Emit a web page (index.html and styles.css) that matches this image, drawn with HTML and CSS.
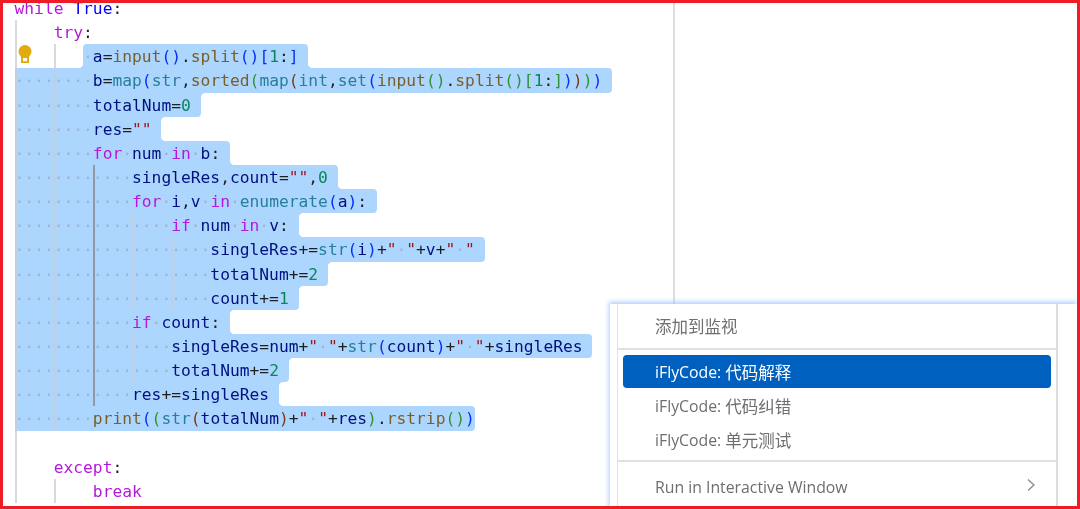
FILE: index.html
```html
<!DOCTYPE html>
<html lang="zh">
<head>
<meta charset="utf-8">
<title>iFlyCode</title>
<link rel="stylesheet" href="styles.css">
</head>
<body>
<div class="frame">
  <div class="editor">
    <div class="code">
      <div class="ln"><span class="k">while</span> <span class="t">True</span>:</div>
      <div class="ln"><span class="g">    </span><span class="k">try</span>:</div>
      <div class="ln"><span class="g">    </span><span class="g">   </span><span class="sel first cd"><span class="d">·</span><span class="n">a</span>=<span class="y">input</span><span class="b1">()</span>.<span class="y">split</span><span class="b1">()</span><span class="b1">[</span><span class="c">1</span>:<span class="b1">]</span></span></div>
      <div class="ln"><span class="sel"><span class="g d">····</span><span class="g d">····</span><span class="n">b</span>=<span class="f">map</span><span class="b1">(</span><span class="f">str</span>,<span class="y">sorted</span><span class="b2">(</span><span class="f">map</span><span class="b3">(</span><span class="f">int</span>,<span class="f">set</span><span class="b1">(</span><span class="y">input</span><span class="b2">()</span>.<span class="y">split</span><span class="b2">()</span><span class="b2">[</span><span class="c">1</span>:<span class="b2">]</span><span class="b1">)</span><span class="b3">)</span><span class="b2">)</span><span class="b1">)</span></span></div>
      <div class="ln"><span class="sel ct"><span class="g d">····</span><span class="g d">····</span><span class="n">totalNum</span>=<span class="c">0</span></span></div>
      <div class="ln"><span class="sel ct cd"><span class="g d">····</span><span class="g d">····</span><span class="n">res</span>=<span class="s">""</span></span></div>
      <div class="ln"><span class="sel cd"><span class="g d">····</span><span class="g d">····</span><span class="k">for</span><span class="d">·</span><span class="n">num</span><span class="d">·</span><span class="k">in</span><span class="d">·</span><span class="n">b</span>:</span></div>
      <div class="ln"><span class="sel cd"><span class="g d">····</span><span class="g d">····</span><span class="g a d">····</span><span class="n">singleRes</span>,<span class="n">count</span>=<span class="s">""</span>,<span class="c">0</span></span></div>
      <div class="ln"><span class="sel"><span class="g d">····</span><span class="g d">····</span><span class="g a d">····</span><span class="k">for</span><span class="d">·</span><span class="n">i</span>,<span class="n">v</span><span class="d">·</span><span class="k">in</span><span class="d">·</span><span class="f">enumerate</span><span class="b1">(</span><span class="n">a</span><span class="b1">)</span>:</span></div>
      <div class="ln"><span class="sel ct cd"><span class="g d">····</span><span class="g d">····</span><span class="g a d">····</span><span class="g d">····</span><span class="k">if</span><span class="d">·</span><span class="n">num</span><span class="d">·</span><span class="k">in</span><span class="d">·</span><span class="n">v</span>:</span></div>
      <div class="ln"><span class="sel"><span class="g d">····</span><span class="g d">····</span><span class="g a d">····</span><span class="g d">····</span><span class="g d">····</span><span class="n">singleRes</span>+=<span class="f">str</span><span class="b1">(</span><span class="n">i</span><span class="b1">)</span>+<span class="s">"<span class="d">·</span>"</span>+<span class="n">v</span>+<span class="s">"<span class="d">·</span>"</span></span></div>
      <div class="ln"><span class="sel ct"><span class="g d">····</span><span class="g d">····</span><span class="g a d">····</span><span class="g d">····</span><span class="g d">····</span><span class="n">totalNum</span>+=<span class="c">2</span></span></div>
      <div class="ln"><span class="sel ct"><span class="g d">····</span><span class="g d">····</span><span class="g a d">····</span><span class="g d">····</span><span class="g d">····</span><span class="n">count</span>+=<span class="c">1</span></span></div>
      <div class="ln"><span class="sel ct cd"><span class="g d">····</span><span class="g d">····</span><span class="g a d">····</span><span class="k">if</span><span class="d">·</span><span class="n">count</span>:</span></div>
      <div class="ln"><span class="sel"><span class="g d">····</span><span class="g d">····</span><span class="g a d">····</span><span class="g d">····</span><span class="n">singleRes</span>=<span class="n">num</span>+<span class="s">"<span class="d">·</span>"</span>+<span class="f">str</span><span class="b1">(</span><span class="n">count</span><span class="b1">)</span>+<span class="s">"<span class="d">·</span>"</span>+<span class="n">singleRes</span></span></div>
      <div class="ln"><span class="sel ct"><span class="g d">····</span><span class="g d">····</span><span class="g a d">····</span><span class="g d">····</span><span class="n">totalNum</span>+=<span class="c">2</span></span></div>
      <div class="ln"><span class="sel ct cd"><span class="g d">····</span><span class="g d">····</span><span class="g a d">····</span><span class="n">res</span>+=<span class="n">singleRes</span></span></div>
      <div class="ln"><span class="sel last"><span class="g d">····</span><span class="g d">····</span><span class="y">print</span><span class="b1">(</span><span class="b2">(</span><span class="f">str</span><span class="b3">(</span><span class="n">totalNum</span><span class="b3">)</span>+<span class="s">"<span class="d">·</span>"</span>+<span class="n">res</span><span class="b2">)</span>.<span class="y">rstrip</span><span class="b2">()</span><span class="b1">)</span></span></div>
      <div class="ln"><span class="g">    </span></div>
      <div class="ln"><span class="g">    </span><span class="k">except</span>:</div>
      <div class="ln"><span class="g">    </span><span class="g">    </span><span class="k">break</span></div>
    </div>
    <svg class="bulb" viewBox="0 0 14 18" width="14" height="18" aria-hidden="true">
      <path d="M7 0a6.5 6.5 0 0 1 6.5 6.5c0 2.6-1.6 3.9-2.5 5.5H3C2.100 10.400.5 9.100.5 6.500A6.500 6.500 0 0 1 7 0z" fill="#e2ab0c"/>
      <path d="M3 11.500h8V18H3z" fill="#e2ab0c"/>
      <path d="M5 13h4v3.200H5z" fill="#fff"/>
    </svg>
  </div>
  <div class="menu">
    <div class="menu-in">
      <div class="item top"><span class="cjk">添加到监视</span></div>
      <div class="sep"></div>
      <div class="item hl">iFlyCode: <span class="cjk">代码解释</span></div>
      <div class="item">iFlyCode: <span class="cjk">代码纠错</span></div>
      <div class="item">iFlyCode: <span class="cjk">单元测试</span></div>
      <div class="sep low"></div>
      <div class="item run"><span>Run in Interactive Window</span>
        <svg class="chev" viewBox="0 0 10 14" width="10" height="14" aria-hidden="true"><path d="M2 1.500 8 7l-6 5.500" fill="none" stroke="#8a8a8a" stroke-width="1.300"/></svg>
      </div>
    </div>
  </div>
</div>
</body>
</html>
```
FILE: styles.css
```css
html, body {
  margin: 0;
  padding: 0;
  background: #fff;
}
.frame {
  position: relative;
  box-sizing: border-box;
  width: 1080px;
  height: 509px;
  overflow: hidden;
  border: 3px solid #ee1c25;
  background: #fff;
}
.editor {
  box-sizing: border-box;
  width: 672px;
  height: 503px;
  overflow: hidden;
  border-right: 2px solid #dcdcdc;
  filter: blur(0.5px);
}
.code {
  margin-top: -7px;
  padding-left: 11.5px;
  font: 16.28px/25.5px "DejaVu Sans Mono", "Liberation Mono", monospace;
  color: #1f1f1f;
}
.ln {
  height: 24.15px;
  white-space: pre;
}
.sel {
  position: relative;
  display: inline-block;
  height: 24.15px;
  padding-right: 9.800px;
  background: #add6ff;
  border-radius: 0 4px 4px 0;
  vertical-align: top;
}
.sel.ct {
  border-top-right-radius: 0;
}
.sel.cd {
  border-bottom-right-radius: 0;
}
.sel.ct::before,
.sel.cd::after {
  content: "";
  position: absolute;
  left: 100%;
  width: 4px;
  height: 4px;
}
.sel.ct::before {
  top: 0;
  background: radial-gradient(circle at 100% 100%, transparent 3.6px, #add6ff 4.2px);
}
.sel.cd::after {
  bottom: 0;
  background: radial-gradient(circle at 100% 0, transparent 3.6px, #add6ff 4.2px);
}
.sel.first {
  border-top-left-radius: 4px;
}
.sel.first::before {
  content: "";
  position: absolute;
  right: 100%;
  bottom: 0;
  width: 4px;
  height: 4px;
  background: radial-gradient(circle at 0 0, transparent 3.6px, #add6ff 4.2px);
}
.sel.last {
  padding-right: 0.5px;
  border-bottom-left-radius: 4px;
}
.g {
  display: inline-block;
  height: 24.15px;
  vertical-align: top;
  box-shadow: inset 2px 0 0 #d9d9d9;
}
.sel .g {
  box-shadow: inset 2px 0 0 #c2cfdc;
}
.sel .g.a {
  box-shadow: inset 2px 0 0 #8f9aa6;
}
.d { color: #9db4cc; }
.k { color: #b418dc; }
.t { color: #0000ff; }
.n { color: #001080; }
.f { color: #267f99; }
.y { color: #795e26; }
.c { color: #098658; }
.s { color: #a31515; }
.b1 { color: #0431fa; }
.b2 { color: #319331; }
.b3 { color: #7b3814; }
.bulb {
  position: absolute;
  left: 15px;
  top: 42px;
}
.menu {
  position: absolute;
  left: 607px;
  top: 301px;
  box-sizing: border-box;
  width: 467px;
  height: 210px;
  padding: 0 19px 0 7px;
  background: #fff;
  box-shadow: -1px -2px 5px #a9cdfb;
  font: 15.800px "Open Sans", "Noto Sans", sans-serif;
  color: #6e6e6e;
  filter: blur(0.3px);
}
.menu-in {
  box-sizing: border-box;
  height: 100%;
  padding: 0 5px;
  border-left: 1px solid #e2e2e2;
  border-right: 2px solid #dddddd;
}
.cjk {
  font-family: "Noto Sans CJK SC", sans-serif;
  font-size: 16.500px;
}
.item {
  display: flex;
  align-items: center;
  height: 34px;
  padding: 0 4px 0 32px;
  white-space: pre;
}
.item.top {
  height: 44px;
}
.item.hl {
  height: 33px;
  margin-bottom: 1px;
  background: #0060c0;
  border-radius: 4px;
  color: #fff;
}
.item.run {
  justify-content: space-between;
  height: 42px;
}
.sep {
  height: 2px;
  margin: 0 -5px 5px;
  background: #e0e0e0;
}
.sep.low {
  margin-top: 3px;
  margin-bottom: 4px;
}
.chev {
  margin-right: 11px;
  margin-top: -4px;
}
```
